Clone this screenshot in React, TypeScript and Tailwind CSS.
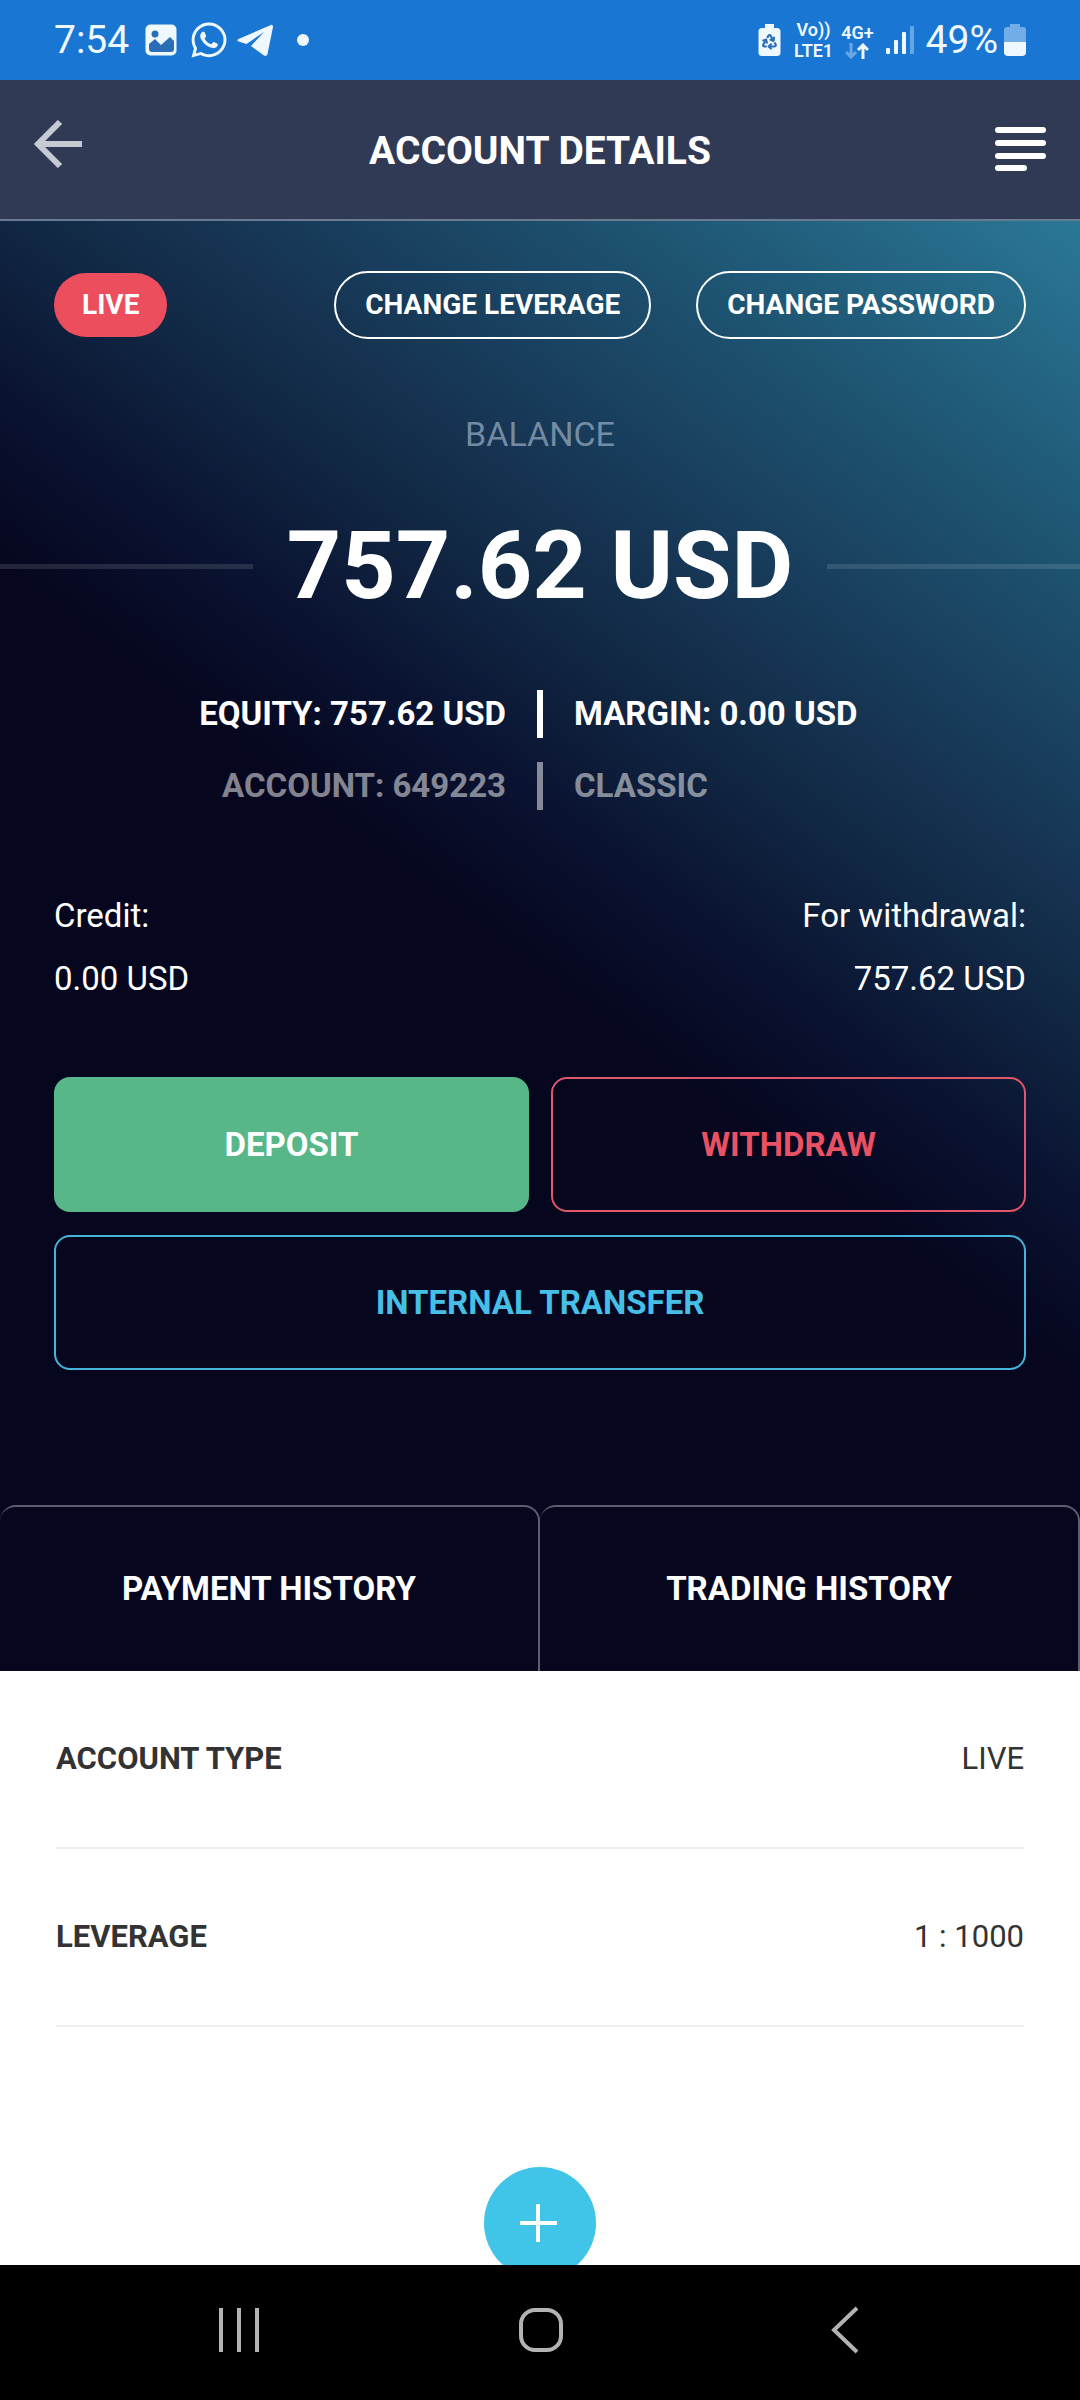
import { FaWhatsapp } from 'react-icons/fa';
import { Recycle } from 'lucide-react';

const StatusBar = () => (
  <div className="flex h-20 items-center justify-between bg-[#1976d3] px-[54px] text-[#f0f8ff]">
    <div className="flex items-center">
      <span className="mr-4 text-[39px] leading-none">7:54</span>
      <svg className="mr-3 h-8 w-8" viewBox="0 0 32 32">
        <rect x="0.5" y="0.5" width="31" height="31" rx="5" fill="#f0f8ff" />
        <circle cx="10" cy="10" r="3.5" fill="#2a6fb5" />
        <path d="M4 20l6-5 6 6 9-8 4 4v8a3 3 0 0 1-3 3H7a3 3 0 0 1-3-3z" fill="#2a6fb5" />
      </svg>
      <FaWhatsapp className="mr-2 h-10 w-10" />
      <svg className="mr-6 h-8 w-9" viewBox="0 0 36 32" fill="currentColor">
        <path d="M34 1L1.500 15c-1.500 1-1.500 2 0 2.500l8 2.500L27 8 14 22l13 9.500c2 1 3 0 3.500-1.500L36 3c0-2-1-2.500-2-2z" />
      </svg>
      <span className="h-3 w-3 rounded-full bg-current" />
    </div>
    <div className="flex items-center">
      <svg className="mr-3 h-8 w-6" viewBox="0 0 24 32">
        <path d="M7 0h9v4h3a3.500 3.500 0 0 1 3.500 3.500v21A3.500 3.500 0 0 1 19 32H4a3.500 3.500 0 0 1-3.500-3.500v-21A3.500 3.500 0 0 1 4 4h3z" fill="#f0f8ff" />
        <Recycle x={3} y={9} width={17} height={17} color="#2a6fb5" strokeWidth={3} />
      </svg>
      <div className="mr-2 flex flex-col items-center text-[18px] font-semibold leading-[21px]">
        <span>Vo))</span>
        <span>LTE1</span>
      </div>
      <div className="mr-3 flex flex-col items-center text-[18px] font-semibold leading-[21px]">
        <span>4G+</span>
        <svg className="h-4 w-6" viewBox="0 0 24 16" fill="none" strokeWidth="3">
          <path d="M6 0v14M1 9l5 5 5-5" stroke="#6aa8e8" />
          <path d="M18 16V2M13 7l5-5 5 5" stroke="currentColor" />
        </svg>
      </div>
      <svg className="mr-3 h-8 w-7" viewBox="0 0 28 32" fill="currentColor">
        <rect x="0" y="24" width="4" height="6" rx="1" />
        <rect x="8" y="16" width="4" height="14" rx="1" />
        <rect x="16" y="8" width="4" height="22" rx="1" />
        <rect x="24" y="2" width="4" height="28" rx="1" fill="#66a6e6" />
      </svg>
      <span className="mr-1.5 text-[39px] leading-none">49%</span>
      <svg className="h-8 w-[22px]" viewBox="0 0 22 32">
        <path d="M6 0h10v3h3a3 3 0 0 1 3 3v13H0V6a3 3 0 0 1 3-3h3z" fill="#72ade8" />
        <path d="M0 18h22v10a4 4 0 0 1-4 4H4a4 4 0 0 1-4-4z" fill="#f0f8ff" />
      </svg>
    </div>
  </div>
);

const Header = () => (
  <header className="grid h-[141px] grid-cols-[1fr_auto_1fr] items-center border-b-2 border-[#6b7a93] bg-[#303a55] px-[34px] text-white">
    <button aria-label="Back" className="justify-self-start pb-3 text-[#c5cad3]">
      <svg className="h-12 w-12" viewBox="0 0 48 48" fill="none" stroke="currentColor" strokeWidth="6">
        <path d="M48 24H5M26 2L4 24l22 22" />
      </svg>
    </button>
    <h1 className="pt-1 text-[39px] font-bold">ACCOUNT DETAILS</h1>
    <button aria-label="Menu" className="justify-self-end">
      <svg className="h-12 w-[52px]" viewBox="0 0 52 48" fill="none" stroke="currentColor" strokeWidth="6" strokeLinecap="round">
        <path d="M4 4h45M4 17h45M4 30h45M4 42h26" />
      </svg>
    </button>
  </header>
);

const Hero = () => (
  <section className="bg-[linear-gradient(37deg,#06061f_49%,#0a1432_57%,#112844_65%,#183b5a_74%,#1d5270_84%,#2a7896_100%)] text-white">
    <div className="flex items-center px-[54px] pt-[50px]">
      <span className="flex h-16 items-center rounded-full bg-[#ed4e5e] px-7 text-[28px] font-bold">LIVE</span>
      <button className="ml-auto h-[68px] rounded-full border-2 border-white px-[29px] text-[28px] font-bold">CHANGE LEVERAGE</button>
      <button className="ml-[45px] h-[68px] rounded-full border-2 border-white px-[29px] text-[28px] font-bold">CHANGE PASSWORD</button>
    </div>

    <p className="mt-[70px] text-center text-[34px] leading-[50px] text-[#9db2c6]/70">BALANCE</p>
    <div className="mt-[47px] flex items-center gap-[34px]">
      <span className="h-[5px] flex-1 bg-white/12" />
      <span className="text-[95px] font-bold leading-[120px]">757.62 USD</span>
      <span className="h-[5px] flex-1 bg-white/12" />
    </div>

    <div className="mt-16 flex flex-col gap-6 text-[33px] font-bold leading-[48px]">
      <div className="grid grid-cols-[1fr_6px_1fr] gap-[31px]">
        <span className="text-right">EQUITY: 757.62 USD</span>
        <span className="bg-white" />
        <span>MARGIN: 0.00 USD</span>
      </div>
      <div className="grid grid-cols-[1fr_6px_1fr] gap-[31px] opacity-50">
        <span className="text-right">ACCOUNT: 649223</span>
        <span className="bg-white" />
        <span>CLASSIC</span>
      </div>
    </div>

    <div className="mt-[74px] flex justify-between px-[54px] text-[33px] leading-[63px]">
      <div>
        <p>Credit:</p>
        <p>0.00 USD</p>
      </div>
      <div className="text-right">
        <p>For withdrawal:</p>
        <p>757.62 USD</p>
      </div>
    </div>

    <div className="mt-[67px] grid grid-cols-2 gap-x-[22px] gap-y-[23px] px-[54px] text-[33px] font-bold">
      <button className="h-[135px] rounded-2xl bg-[#57b788] text-white">DEPOSIT</button>
      <button className="h-[135px] rounded-2xl border-2 border-[#e0566a] text-[#ea5264]">WITHDRAW</button>
      <button className="col-span-2 h-[135px] rounded-2xl border-2 border-[#45b4da] text-[#45bfe6]">INTERNAL TRANSFER</button>
    </div>

    <div className="mt-[135px] grid grid-cols-2 text-[33px] font-bold">
      <button className="h-[166px] rounded-t-2xl border-t-2 border-r-2 border-[#5d5d72] bg-[#06061f]">PAYMENT HISTORY</button>
      <button className="h-[166px] rounded-t-2xl border-t-2 border-r-2 border-[#5d5d72] bg-[#06061f]">TRADING HISTORY</button>
    </div>
  </section>
);

const details = [
  { label: 'ACCOUNT TYPE', value: 'LIVE' },
  { label: 'LEVERAGE', value: '1 : 1000' },
];

const NavBar = () => (
  <nav className="flex h-[135px] items-center justify-around bg-black px-[88px] pb-[5px] text-[#b3b3b3]">
    <button aria-label="Recent apps">
      <svg className="h-12 w-12" viewBox="0 0 48 48" fill="none" stroke="currentColor" strokeWidth="4">
        <path d="M6 2v44M24 2v44M42 2v44" />
      </svg>
    </button>
    <button aria-label="Home">
      <svg className="h-12 w-12" viewBox="0 0 48 48" fill="none" stroke="currentColor" strokeWidth="4">
        <rect x="5" y="4" width="40" height="40" rx="14" />
      </svg>
    </button>
    <button aria-label="Back to previous screen">
      <svg className="h-12 w-12" viewBox="0 0 48 48" fill="none" stroke="currentColor" strokeWidth="4">
        <path d="M40 2L17 24l23 22" />
      </svg>
    </button>
  </nav>
);

export default function App() {
  return (
    <div className="flex min-h-screen flex-col bg-white font-[Roboto,sans-serif]">
      <StatusBar />
      <Header />
      <Hero />
      <main className="flex flex-1 flex-col px-14 text-[#333333]">
        <dl>
          {details.map((item) => (
            <div key={item.label} className="flex h-[178px] items-center justify-between border-b-2 border-[#eeeeee] text-[31px]">
              <dt className="font-bold">{item.label}</dt>
              <dd>{item.value}</dd>
            </div>
          ))}
        </dl>
        <div className="mt-auto flex h-[98px] justify-center overflow-hidden">
          <button aria-label="Add" className="flex h-28 w-28 items-center justify-center rounded-full bg-[#40c4e8] text-white">
            <svg className="h-10 w-10" viewBox="0 0 40 40" stroke="currentColor" strokeWidth="4">
              <path d="M0 20h37M18 1v38" />
            </svg>
          </button>
        </div>
      </main>
      <NavBar />
    </div>
  );
}
